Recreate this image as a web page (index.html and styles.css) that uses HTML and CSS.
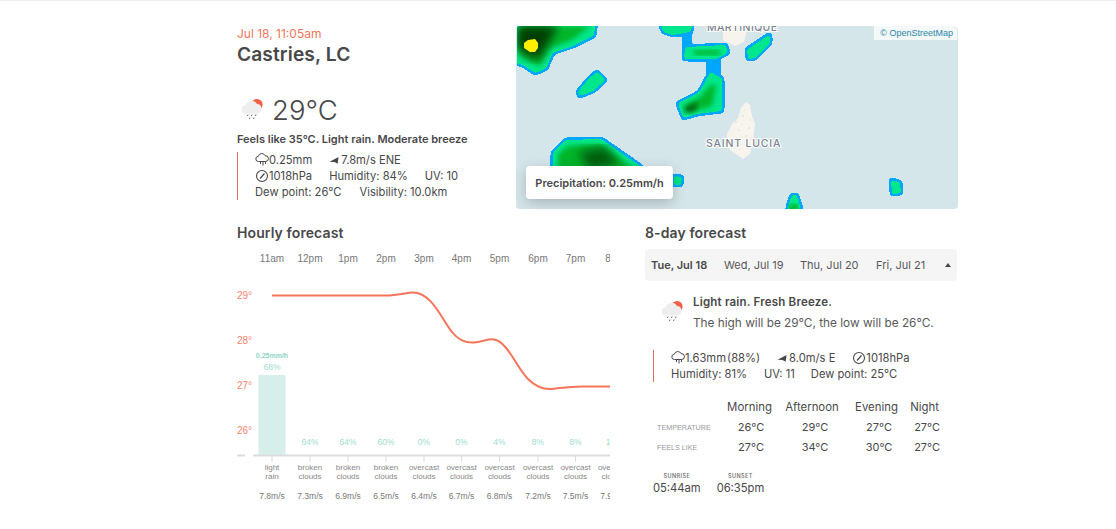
FILE: index.html
```html
<!DOCTYPE html>
<html lang="en">
<head>
<meta charset="utf-8">
<title>Castries, LC</title>
<link rel="stylesheet" href="styles.css">
</head>
<body>
<svg class="defs" width="0" height="0">
  <defs>
    <symbol id="wx" viewBox="0 0 28 28">
      <circle cx="20" cy="8.500" r="5.600" fill="#f2604a"/>
      <path d="M9 17.500a4 4 0 0 1-.6-8 6.300 6.300 0 0 1 11.600-1.400 4.600 4.600 0 0 1 2.600 8.300c-.8.700-1.700 1.100-3 1.100z" fill="#eeeeee"/>
      <path d="M11 18.500l-.5 1.500M15 18.500l-.5 1.500M19 18.500l-.5 1.500M13 21.500l-.5 1.500M17 21.500l-.5 1.500" stroke="#666" stroke-width="1" fill="none"/>
    </symbol>
    <symbol id="rain" viewBox="0 0 14 14">
      <path d="M3.500 8.500a2.600 2.600 0 0 1-.2-5.200 3.600 3.600 0 0 1 6.800-.6 2.900 2.900 0 0 1 .8 5.800z" fill="none" stroke="#48484a"/>
      <path d="M5.500 9v2M8 9v3.500M10.500 9v2" stroke="#48484a" fill="none"/>
    </symbol>
    <symbol id="wind" viewBox="0 0 12 10">
      <path d="M.5 6.500 10.500 1 9.500 8.500 6 6.800z" fill="#48484a"/>
    </symbol>
    <symbol id="gauge" viewBox="0 0 14 14">
      <circle cx="7" cy="7" r="5.500" fill="none" stroke="#48484a" stroke-width="1.100"/>
      <path d="M5 9.500 9.500 4.500" stroke="#48484a" stroke-width="1.200"/>
    </symbol>
    <g id="blob-1"><path d="M517 20H595L593 35 573 45 552 52 545 68 535 72 525 65 517 62z"/></g>
    <g id="blob-2"><path d="M579 92 590 79 597 73 604 80 593 90 580 95z"/></g>
    <g id="blob-3"><path d="M660 20H692L690 31 673 34 664 31z"/></g>
    <g id="blob-4"><path d="M686 48 725 46 727 52 716 58 685 58z"/></g>
    <g id="blob-5"><path d="M679 104 700 93 711 73 721 79 721 110 697 113 684 117z"/></g>
    <g id="blob-6"><path d="M554 153 566 141 601 140 640 167V190H554z"/></g>
    <g id="blob-7"><path d="M675 177 681 178 680 184 675 184z"/></g>
    <g id="blob-8"><path d="M892 181 899 183 900 192 893 193z"/></g>
    <g id="blob-9"><path d="M788 214 790 203 793 196 796 196 799 205 800 214z"/></g>
    <g id="blob-10"><path d="M748 50 769 36 769 43 755 57 749 58z"/></g>
  </defs>
</svg>

<main class="page">
  <section class="top">
    <div class="now">
      <div class="date">Jul 18, 11:05am</div>
      <h1 class="city">Castries, LC</h1>
      <div class="temp-row">
        <svg class="wx-icon"><use href="#wx"/></svg>
        <span class="temp">29°C</span>
      </div>
      <p class="feels">Feels like 35°C. Light rain. Moderate breeze</p>
      <div class="stats stats-now">
        <div class="stat-line">
          <span class="ic-text"><svg class="ic"><use href="#rain"/></svg>0.25mm</span>
          <span class="ic-text wind-now"><svg class="ic-wind"><use href="#wind"/></svg>7.8m/s ENE</span>
        </div>
        <div class="stat-line">
          <span class="ic-text"><svg class="ic"><use href="#gauge"/></svg>1018hPa</span>
          <span class="hum-now">Humidity: 84%</span>
          <span class="uv-now">UV: 10</span>
        </div>
        <div class="stat-line">
          <span>Dew point: 26°C</span>
          <span class="vis-now">Visibility: 10.0km</span>
        </div>
      </div>
    </div>

    <div class="map">
      <svg class="map-art" viewBox="516 26 442 183" width="442" height="183">
        <defs>
          <filter id="soft"><feGaussianBlur stdDeviation="2.500"/></filter>
          <filter id="soft-lg"><feGaussianBlur stdDeviation="5"/></filter>
          <filter id="round" x="-5%" y="-5%" width="110%" height="110%" color-interpolation-filters="sRGB">
            <feGaussianBlur stdDeviation="1.500"/>
            <feComponentTransfer><feFuncA type="discrete" tableValues="0 1"/></feComponentTransfer>
          </filter>
          <clipPath id="mapclip"><rect x="517" y="26" width="441" height="183"/></clipPath>
        </defs>
        <path class="land" d="M723 26H748L744 42 735 46 723 40z"/>
        <path class="land" d="M727 134 732 124 738 118 741 108 746 102 750 105 752 116 755 124 753 142 750 154 743 159 736 154 730 150 727 144z"/>
        <path class="land-dots" d="M735 122h2M742 116h2M748 128h2M738 130h2M745 136h2M733 141h2M741 124h1M750 120h1M747 148h2M739 150h1M744 110h1M736 138h1M751 138h1"/>
        <text class="map-label map-label-top" x="707" y="31">MARTINIQUE</text>
        <g clip-path="url(#mapclip)">
          <g class="rim" filter="url(#round)">
            <use href="#blob-1"/><use href="#blob-2"/><use href="#blob-3"/><use href="#blob-4"/><use href="#blob-5"/>
            <use href="#blob-6"/><use href="#blob-7"/><use href="#blob-8"/><use href="#blob-9"/><use href="#blob-10"/>
            <path d="M685.500 30H688.500V48H685.500z"/>
            <path d="M710 56H717V74H710z"/>
          </g>
          <g class="core" filter="url(#round)">
            <use href="#blob-1"/><use href="#blob-2"/><use href="#blob-3"/><use href="#blob-4"/><use href="#blob-5"/>
            <use href="#blob-6"/><use href="#blob-7"/><use href="#blob-8"/><use href="#blob-9"/><use href="#blob-10"/>
          </g>
          <path class="g-mid" filter="url(#soft)" d="M520 26H590L572 40 550 48 540 66 526 60 519 54z"/>
          <path class="g-dark" filter="url(#soft-lg)" d="M517 26H558L548 44 538 60 526 54 517 48z"/>
          <path class="g-mid" filter="url(#soft)" d="M694 50H720V55H694z"/>
          <path class="g-mid" filter="url(#soft)" d="M683 106 700 97 712 84 716 86 712 106 690 112z"/>
          <path class="g-dark-2" filter="url(#soft)" d="M684 108 698 102 696 110 686 113z"/>
          <path class="g-mid" filter="url(#soft)" d="M558 154 568 146 600 144 636 170H558z"/>
          <path class="g-dark-2" filter="url(#soft-lg)" d="M578 152 605 147 620 164 590 170z"/>
          <path class="g-mid" filter="url(#soft)" d="M789 204H798V212H789z"/>
          <path class="yellow" d="M524 43 528 40 535 39 538 43 538 48 535 52 530 52 524 48z"/>
        </g>
        <text class="map-label" x="706" y="147">SAINT LUCIA</text>
      </svg>
      <div class="osm">© OpenStreetMap</div>
      <div class="tip">Precipitation: 0.25mm/h</div>
    </div>
  </section>

  <section class="bottom">
    <div class="hourly">
      <h2 class="head">Hourly forecast</h2>
      <svg class="chart" viewBox="237 248 373 262" width="373" height="262">
        <g class="t-hour">
          <text x="272" y="262">11am</text><text x="310" y="262">12pm</text><text x="348" y="262">1pm</text><text x="386" y="262">2pm</text><text x="424" y="262">3pm</text><text x="461.500" y="262">4pm</text><text x="499.500" y="262">5pm</text><text x="538" y="262">6pm</text><text x="575.500" y="262">7pm</text><text x="608" y="262">8</text>
        </g>
        <g class="t-deg">
          <text x="237" y="299">29°</text><text x="237" y="344">28°</text><text x="237" y="389">27°</text><text x="237" y="434">26°</text>
        </g>
        <rect class="bar" x="258.500" y="375" width="27" height="80"/>
        <path class="axis" d="M237 455.500H245M253 455.500H610"/>
        <path class="ticks" d="M272 456v6M310 456v6M348 456v6M386 456v6M424 456v6M461.500 456v6M499.500 456v6M538 456v6M575.500 456v6"/>
        <path class="line" d="M272 295.500H386C398 295.500 406 292.500 413 292.500C432 292.500 442 320 452 332C459 341 467 343 474 342.500C482 342 488 338.500 494 339.500C507 341 517 368 528 379C536 387 544 389.500 552 389C562 388 570 386.500 582 386.500H610"/>
        <text class="t-mm" x="272" y="358">0.25mm/h</text>
        <g class="t-pct">
          <text x="272" y="370">68%</text><text x="310" y="445">64%</text><text x="348" y="445">64%</text><text x="386" y="445">60%</text><text x="424" y="445">0%</text><text x="461.500" y="445">0%</text><text x="499.500" y="445">4%</text><text x="538" y="445">8%</text><text x="575.500" y="445">8%</text><text x="608" y="445">1</text>
        </g>
        <g class="t-cond">
          <text x="272" y="470">light</text><text x="272" y="479">rain</text>
          <text x="310" y="470">broken</text><text x="310" y="479">clouds</text>
          <text x="348" y="470">broken</text><text x="348" y="479">clouds</text>
          <text x="386" y="470">broken</text><text x="386" y="479">clouds</text>
          <text x="424" y="470">overcast</text><text x="424" y="479">clouds</text>
          <text x="461.500" y="470">overcast</text><text x="461.500" y="479">clouds</text>
          <text x="499.500" y="470">overcast</text><text x="499.500" y="479">clouds</text>
          <text x="538" y="470">overcast</text><text x="538" y="479">clouds</text>
          <text x="575.500" y="470">overcast</text><text x="575.500" y="479">clouds</text>
          <text x="613" y="470">overcast</text><text x="613" y="479">clouds</text>
        </g>
        <g class="t-wind">
          <text x="272" y="499">7.8m/s</text><text x="310" y="499">7.3m/s</text><text x="348" y="499">6.9m/s</text><text x="386" y="499">6.5m/s</text><text x="424" y="499">6.4m/s</text><text x="461.500" y="499">6.7m/s</text><text x="499.500" y="499">6.8m/s</text><text x="538" y="499">7.2m/s</text><text x="575.500" y="499">7.5m/s</text><text x="613" y="499">7.9m/s</text>
        </g>
      </svg>
    </div>

    <div class="daily">
      <h2 class="head">8-day forecast</h2>
      <div class="tabs">
        <span class="tab tab-on">Tue, Jul 18</span>
        <span class="tab">Wed, Jul 19</span>
        <span class="tab">Thu, Jul 20</span>
        <span class="tab">Fri, Jul 21</span>
        <span class="caret"></span>
      </div>
      <div class="summary">
        <svg class="wx-icon wx-day"><use href="#wx"/></svg>
        <div>
          <div class="sum-title">Light rain. Fresh Breeze.</div>
          <div class="sum-text">The high will be 29°C, the low will be 26°C.</div>
        </div>
      </div>
      <div class="stats stats-day">
        <div class="stat-line">
          <span class="ic-text"><svg class="ic"><use href="#rain"/></svg><span class="precip">1.63mm (88%)</span></span>
          <span class="ic-text wind-day"><svg class="ic-wind"><use href="#wind"/></svg>8.0m/s E</span>
          <span class="ic-text press-day"><svg class="ic"><use href="#gauge"/></svg>1018hPa</span>
        </div>
        <div class="stat-line">
          <span>Humidity: 81%</span>
          <span class="uv-day">UV: 11</span>
          <span class="dew-day">Dew point: 25°C</span>
        </div>
      </div>
      <table class="temps">
        <tr class="temps-head"><th></th><th class="c1">Morning</th><th class="c2">Afternoon</th><th class="c3">Evening</th><th class="c4">Night</th></tr>
        <tr><td class="row-label">TEMPERATURE</td><td class="c1">26°C</td><td class="c2">29°C</td><td class="c3">27°C</td><td class="c4">27°C</td></tr>
        <tr><td class="row-label">FEELS LIKE</td><td class="c1">27°C</td><td class="c2">34°C</td><td class="c3">30°C</td><td class="c4">27°C</td></tr>
      </table>
      <div class="sun">
        <div class="sun-item"><div class="sun-label">SUNRISE</div><div class="sun-time">05:44am</div></div>
        <div class="sun-item"><div class="sun-label">SUNSET</div><div class="sun-time">06:35pm</div></div>
      </div>
    </div>
  </section>
</main>
</body>
</html>
```
FILE: styles.css
```css
* { box-sizing: border-box; }
html, body { margin: 0; padding: 0; }
body {
  height: 529px;
  overflow: hidden;
  background: #fff;
  border-top: 1px solid #eee;
  color: #48484a;
  font-family: Inter, "Liberation Sans", sans-serif;
  font-size: 12px;
}
.defs { display: block; height: 0; }
.page { width: 721px; margin-left: 237px; }
.top { display: flex; padding-top: 25px; height: 207px; }
.now { width: 279px; }
.date { color: #f4755a; font-size: 12px; line-height: 15px; }
.city { margin: 1px 0 0; font-size: 19.200px; line-height: 24px; font-weight: 600; letter-spacing: .1px; }
.temp-row { display: flex; align-items: center; margin-top: 26px; height: 36px; }
.wx-icon { width: 28px; height: 28px; flex: none; }
.temp { margin-left: 7px; font-size: 27.500px; font-weight: 300; }
.feels { margin: 4px 0 0; font-size: 11px; line-height: 14px; font-weight: 600; white-space: nowrap; }
.stats { border-left: 1px solid #e0705a; line-height: 16px; white-space: nowrap; font-size: 11.200px; }
.stats-now { margin-top: 6px; padding-left: 17px; height: 48px; }
.stat-line { display: flex; height: 16px; align-items: center; }
.ic-text { display: inline-flex; align-items: center; }
.ic { width: 14px; height: 14px; margin-right: 0; flex: none; }
.ic-wind { width: 11px; height: 9px; margin-right: 1px; flex: none; }
.wind-now { margin-left: 17px; }
.hum-now { margin-left: 17px; }
.uv-now { margin-left: 17px; }
.vis-now { margin-left: 18px; }

.map {
  position: relative;
  width: 442px;
  height: 183px;
  border-radius: 4px;
  overflow: hidden;
  background: #d5e6ea;
}
.map-art { display: block; }
.land { fill: #f7f3ed; }
.land-dots { stroke: #ecd3c6; stroke-width: 1; fill: none; }
.map-label {
  font-size: 10.500px;
  font-weight: 500;
  letter-spacing: .8px;
  fill: #7b848e;
  stroke: #fff;
  stroke-width: 2px;
  paint-order: stroke;
}
.map-label-top { letter-spacing: .4px; }
.rim { fill: #00a6ff; stroke: #00a6ff; stroke-width: 7px; stroke-linejoin: round; }
.core { fill: #00e68a; stroke: #00e68a; stroke-width: 2px; stroke-linejoin: round; }
.g-mid { fill: #00b52b; }
.g-dark { fill: #003c00; }
.g-dark-2 { fill: #005f10; }
.yellow { fill: #fff000; }
.osm {
  position: absolute;
  top: 0;
  right: 1px;
  padding: 0 4px 0 6px;
  height: 14px;
  line-height: 14px;
  font-family: "Liberation Sans", sans-serif;
  font-size: 9px;
  color: #2b87a8;
  background: rgba(255, 255, 255, .7);
}
.tip {
  position: absolute;
  left: 10px;
  top: 140px;
  width: 147px;
  height: 33px;
  line-height: 34px;
  text-align: center;
  background: #fff;
  border-radius: 4px;
  font-size: 11px;
  font-weight: 600;
  white-space: nowrap;
  box-shadow: 0 4px 14px rgba(0, 0, 0, .22);
}

.bottom { display: flex; padding-top: 16px; }
.hourly { width: 373px; margin-right: 35px; }
.daily { width: 312px; }
.head { margin: 0; font-size: 14px; line-height: 18px; font-weight: 600; letter-spacing: .1px; }
.chart { display: block; margin-top: 6px; overflow: hidden; }
.chart text { font-family: "Liberation Sans", sans-serif; text-anchor: middle; }
.t-hour text { font-size: 10px; fill: #777; }
.t-deg text { font-size: 10px; fill: #f8846c; text-anchor: start; }
.bar { fill: #d6efea; }
.axis { stroke: #ddd; stroke-width: 2px; fill: none; }
.ticks { stroke: #ddd; stroke-width: 1px; fill: none; }
.line { stroke: #f4755a; stroke-width: 2px; fill: none; }
.t-mm { font-size: 7px; font-weight: 700; fill: #8fd6c6; }
.t-pct text { font-size: 8.500px; fill: #9edccd; }
.t-cond text { font-size: 8px; fill: #888; }
.t-wind text { font-size: 8.500px; fill: #777; }

.tabs {
  display: flex;
  align-items: center;
  height: 32px;
  margin-top: 7px;
  padding-left: 6px;
  background: #f5f5f5;
  border-radius: 4px;
  position: relative;
  font-size: 11px;
  white-space: nowrap;
}
.tab { width: 76px; color: #58585a; }
.tab:first-child { width: 73px; }
.tab-on { font-weight: 600; color: #48484a; }
.caret {
  position: absolute;
  right: 6px;
  top: 14px;
  border-left: 3px solid transparent;
  border-right: 3px solid transparent;
  border-bottom: 4px solid #48484a;
}
.summary { display: flex; margin-top: 14px; padding-left: 12px; }
.wx-day { margin-top: 3px; margin-right: 8px; }
.sum-title { font-size: 11.500px; font-weight: 600; line-height: 14px; white-space: nowrap; letter-spacing: .2px; }
.sum-text { margin-top: 7px; font-size: 11.800px; line-height: 15px; white-space: nowrap; color: #58585a; }
.stats-day { margin-top: 19px; margin-left: 8px; padding-left: 17px; height: 32px; }
.precip { word-spacing: -2px; }
.wind-day { margin-left: 17px; }
.press-day { margin-left: 17px; }
.uv-day { margin-left: 17px; }
.dew-day { margin-left: 16px; }
.temps {
  margin-top: 15px;
  margin-left: 12px;
  border-collapse: collapse;
  font-size: 11px;
  table-layout: fixed;
  width: 284px;
}
.temps th, .temps td { padding: 0; height: 20px; font-weight: 400; white-space: nowrap; }
.temps th { font-size: 11.400px; }
.temps th:first-child, .row-label { width: 68px; }
.temps .row-label { font-family: "Liberation Sans", sans-serif; font-size: 7.200px; color: #999; }
.c1 { width: 49px; text-align: center; }
.c2 { width: 70px; text-align: center; }
.c3 { width: 60px; text-align: center; }
.c4 { width: 37px; text-align: right; }
.temps td.c1 { padding-left: 3px; }
.temps th.c2 { padding-left: 6px; }
.temps td.c2 { padding-left: 12px; }
.temps th.c3 { padding-left: 5px; }
.temps td.c3 { padding-left: 10px; }
.temps th.c4 { padding-right: 2px; }
.temps td.c4 { padding-right: 1px; }
.sun { display: flex; margin-top: 15px; padding-left: 8px; gap: 16px; }
.sun-item { text-align: center; }
.sun-label { font-size: 5.500px; line-height: 8px; font-weight: 600; color: #777; letter-spacing: .4px; }
.sun-time { font-size: 11.200px; line-height: 16px; margin-top: 0; white-space: nowrap; }
```
